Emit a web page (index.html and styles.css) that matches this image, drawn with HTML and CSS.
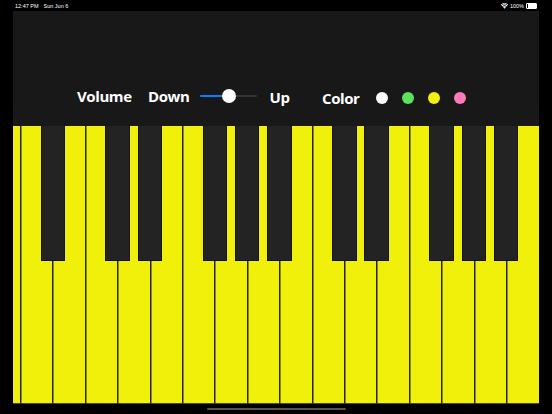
FILE: index.html
```html
<!DOCTYPE html>
<html>
<head>
<meta charset="utf-8">
<link rel="stylesheet" href="styles.css">
</head>
<body>
<div class="screen">
  <div class="status">
    <div class="status-left"><span>12:47 PM</span><span>Sun Jun 6</span></div>
    <div class="status-right">
      <svg class="wifi" width="7" height="6" viewBox="0 0 14 11"><path d="M7 11 L9.2 8.4 A3.4 3.4 0 0 0 4.8 8.4 Z M1 4.6 A8.5 8.5 0 0 1 13 4.6 L11.5 6.3 A6.3 6.3 0 0 0 2.5 6.3 Z M3.4 7.2 A5 5 0 0 1 10.6 7.2 L9.6 8.3 A3.6 3.6 0 0 0 4.4 8.3 Z" fill="#fff"/><path d="M0 3.2 A10 10 0 0 1 14 3.2" stroke="#fff" stroke-width="1.6" fill="none"/></svg>
      <span>100%</span>
      <div class="battery"><div class="battery-fill"></div></div>
    </div>
  </div>
  <div class="panel">
    <div class="controls">
      <span class="label volume">Volume</span>
      <span class="label down">Down</span>
      <div class="slider">
        <div class="track"><div class="fill"></div></div>
        <div class="thumb"></div>
      </div>
      <span class="label up">Up</span>
      <span class="label color">Color</span>
      <div class="swatches">
        <svg class="swatch" width="12" height="12" viewBox="0 0 12 12"><circle cx="6" cy="6" r="6" fill="#ffffff"/></svg>
        <svg class="swatch" width="12" height="12" viewBox="0 0 12 12"><circle cx="6" cy="6" r="6" fill="#5ee25e"/></svg>
        <svg class="swatch" width="12" height="12" viewBox="0 0 12 12"><circle cx="6" cy="6" r="6" fill="#f0f00a"/></svg>
        <svg class="swatch" width="12" height="12" viewBox="0 0 12 12"><circle cx="6" cy="6" r="6" fill="#ff7ab9"/></svg>
      </div>
    </div>
  </div>
  <div class="keyboard">
    <div class="whites">
      <div class="white partial"></div>
      <div class="white"></div><div class="white"></div><div class="white"></div><div class="white"></div>
      <div class="white"></div><div class="white"></div><div class="white"></div><div class="white"></div>
      <div class="white"></div><div class="white"></div><div class="white"></div><div class="white"></div>
      <div class="white"></div><div class="white"></div><div class="white"></div><div class="white"></div>
    </div>
    <div class="black" style="left:28.2px"></div>
    <div class="black" style="left:92.9px"></div>
    <div class="black" style="left:125.3px"></div>
    <div class="black" style="left:190.0px"></div>
    <div class="black" style="left:222.4px"></div>
    <div class="black" style="left:254.8px"></div>
    <div class="black" style="left:319.5px"></div>
    <div class="black" style="left:351.9px"></div>
    <div class="black" style="left:416.6px"></div>
    <div class="black" style="left:449.0px"></div>
    <div class="black" style="left:481.4px"></div>
  </div>
  <div class="home"><div class="home-bar"></div></div>
</div>
</body>
</html>
```
FILE: styles.css
```css
html, body {
  margin: 0;
  padding: 0;
  background: #000;
}
.screen {
  width: 552px;
  height: 414px;
  background: #000;
  overflow: hidden;
  font-family: "Open Sans", "Liberation Sans", sans-serif;
}
.status {
  height: 11px;
  display: flex;
  justify-content: space-between;
  align-items: center;
  padding: 0 15px 0 15px;
  color: #fff;
  font-family: "Liberation Sans", sans-serif;
  font-size: 5.5px;
}
.status-left {
  display: flex;
  gap: 5px;
  padding-top: 1px;
}
.status-right {
  display: flex;
  align-items: center;
  gap: 2px;
  padding-top: 1px;
}
.wifi {
  display: block;
}
.battery {
  width: 8px;
  height: 3.5px;
  border: 0.5px solid #fff;
  border-radius: 1px;
  padding: 0.5px;
}
.battery-fill {
  width: 100%;
  height: 100%;
  background: #fff;
}
.panel {
  margin-left: 12.5px;
  width: 526px;
  height: 115px;
  background: #181818;
  box-sizing: border-box;
  padding-top: 73px;
}
.controls {
  display: flex;
  align-items: center;
  height: 24px;
  padding-left: 64.5px;
  color: #fff;
}
.label {
  font-weight: 700;
  font-size: 15px;
  letter-spacing: -0.4px;
  line-height: 24px;
  white-space: nowrap;
  flex-shrink: 0;
}
.volume {
  width: 71px;
}
.down {
  width: 52px;
}
.slider {
  width: 57px;
  height: 14px;
  position: relative;
  display: flex;
  align-items: center;
  flex-shrink: 0;
}
.track {
  width: 100%;
  height: 2px;
  background: #333;
  border-radius: 1px;
}
.fill {
  width: 29px;
  height: 2px;
  background: #0a7cff;
  border-radius: 1px;
}
.thumb {
  position: absolute;
  left: 22px;
  top: 0;
  width: 14px;
  height: 14px;
  border-radius: 50%;
  background: #fff;
}
.up {
  margin-left: 12.5px;
  width: 52.5px;
  padding-top: 1px;
}
.color {
  width: 54px;
  padding-top: 3px;
}
.swatches {
  display: flex;
  gap: 14px;
  padding-top: 3px;
  flex-shrink: 0;
}
.swatch {
  display: block;
  flex-shrink: 0;
}
.keyboard {
  margin-left: 12.5px;
  width: 526px;
  height: 278px;
  position: relative;
}
.whites {
  display: flex;
  height: 100%;
}
.white {
  flex: 1;
  background: #f0f00a;
  border-left: 1px solid #26260a;
  border-bottom: 1px solid #4a4a10;
  box-shadow: inset 1px 0 0 #8a8a10;
}
.white.partial {
  flex: 0 0 7.5px;
  border-left: none;
  box-shadow: none;
}
.black {
  position: absolute;
  top: 0;
  width: 24.5px;
  height: 135px;
  background: #232323;
  border: 1px solid #121212;
  border-top: none;
  box-sizing: border-box;
}
.home {
  display: flex;
  justify-content: center;
  padding-top: 4px;
}
.home-bar {
  width: 139px;
  height: 2px;
  border-radius: 1px;
  background: #555;
}
```
